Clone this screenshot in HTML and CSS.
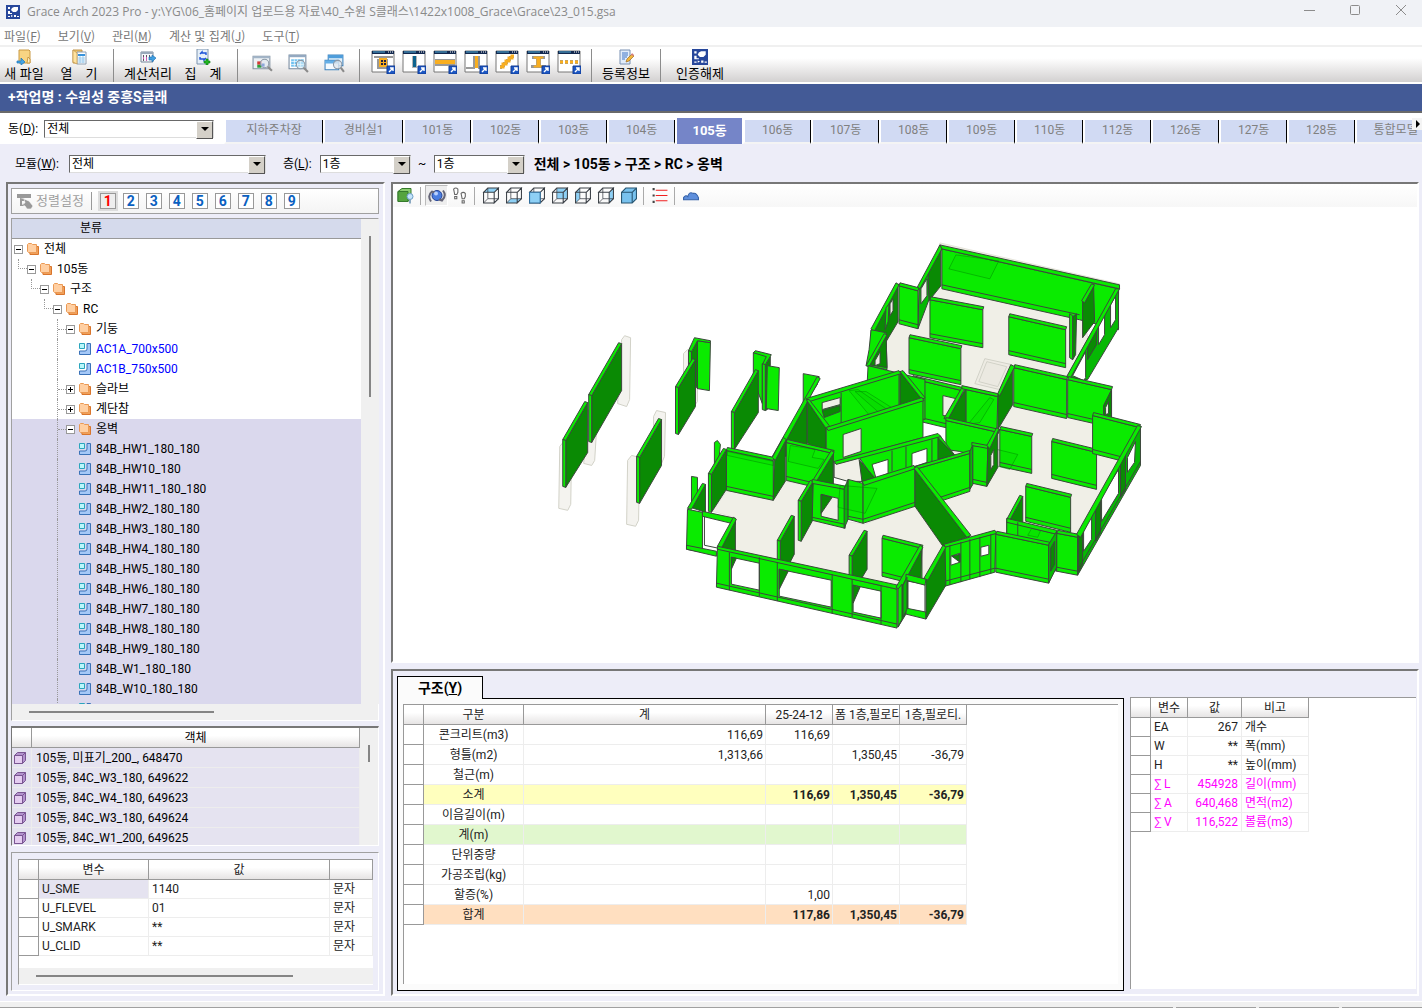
FILE: index.html
```
<!DOCTYPE html>
<html lang="ko">
<head>
    <meta charset="UTF-8">
    <meta name="viewport" content="width=device-width, initial-scale=1.0">
    <title>Grace Arch 2023 Pro</title>
    <link rel="stylesheet" href="styles.css">
</head>
<body>
    <!-- Icon shapes -->
    <svg class="sprite" aria-hidden="true">
        <symbol id="i-logo" viewBox="0 0 14 14">
            <rect width="14" height="14" fill="#27479b"/>
            <path d="M2 2h2v2H2zM2 6h2v2h2v1H2zM6 3l2-1h4v3l-2 2H7L5 5zM2 11h2v1H2zM5 10l2 1-2 1zM8 10h2v2H8zM11 11h2v1h-2z" fill="#fff"/>
        </symbol>
        <symbol id="i-new" viewBox="0 0 16 16">
            <path d="M3 1h10l1 1v12H3z" fill="#f8d583" stroke="#c99a45"/>
            <path d="M12 8l2 2v4h-3z" fill="#fff1c2" stroke="#c99a45"/>
            <path d="M1 12h4V9l4 4-4 3v-2H1z" fill="#45a5e5" stroke="#1874b9" stroke-width=".7"/>
        </symbol>
        <symbol id="i-open" viewBox="0 0 16 16">
            <path d="M2 1h9v13H2z" fill="#f0c46a" stroke="#c0954a"/>
            <path d="M6 3h9v12H6z" fill="#fff" stroke="#8c9db0"/>
            <path d="M7 5h7v2H7z" fill="#3793dc"/>
            <path d="M7 9h7M7 11h7M7 13h7M9 7v7M12 7v7" stroke="#8bc3ea" stroke-width=".8"/>
            <path d="M2 1l4 3v11l-4-2z" fill="#ffe3a0" stroke="#c0954a" stroke-width=".7"/>
        </symbol>
        <symbol id="i-calc" viewBox="0 0 16 16">
            <path d="M1 3h12v10H1z" fill="#f6f8fb" stroke="#77879b"/>
            <path d="M1 3h12v2H1z" fill="#9aa9ba"/>
            <path d="M3 7h1M6 7h1M9 7h1M3 11h1" stroke="#323" stroke-width="1.400"/>
            <path d="M3 9h1M6 9h1M6 11h1" stroke="#c0309c" stroke-width="1.400"/>
            <path d="M9 8h3V6l4 3-4 4v-2H9z" fill="#3f9ee0" stroke="#1d6aac" stroke-width=".6"/>
        </symbol>
        <symbol id="i-sum" viewBox="0 0 16 16">
            <path d="M2 0h11v15H2z" fill="#e5eff9" stroke="#7d93ad"/>
            <path d="M5 5l2-2v1h4v2M11 9l-2 2v-1H5V8" fill="none" stroke="#1a52d8" stroke-width="1.4"/>
            <path d="M9 12h2v-2h2v2h2v2h-2v2h-2v-2H9z" fill="#22b722" stroke="#0b7d12" stroke-width=".6"/>
        </symbol>
        <symbol id="i-find1" viewBox="0 0 20 18">
            <path d="M1 2h16v12H1z" fill="#edf1f5" stroke="#8392a3"/><path d="M1 2h16v2H1z" fill="#a2b4c7"/>
            <path d="M5 10h4v3H5z" fill="#28a13a"/><path d="M5 7h4v3H5z" fill="#d43a35"/><path d="M9 9h3v3H9z" fill="#3a68c9"/>
            <circle cx="12" cy="9" r="4" fill="#dfe6ed" fill-opacity=".5" stroke="#8b98a5"/><path d="M15 12l4 4" stroke="#8a8a8a" stroke-width="2"/>
        </symbol>
        <symbol id="i-find2" viewBox="0 0 20 18">
            <path d="M1 1h16v13H1z" fill="#fff" stroke="#75899f"/><path d="M1 1h16v2H1z" fill="#93a9c1"/>
            <path d="M3 5h12v7H3z" fill="#6cc0f0"/><path d="M3 7h12M3 10h12M6 5v7M9 5v7M12 5v7" stroke="#fff" stroke-width=".7"/>
            <circle cx="12" cy="10" r="4" fill="#d6edf8" fill-opacity=".6" stroke="#8b98a5"/><path d="M15 13l4 4" stroke="#8a8a8a" stroke-width="2"/>
        </symbol>
        <symbol id="i-find3" viewBox="0 0 20 18">
            <path d="M4 1h14v10H4z" fill="#e5f2fc" stroke="#3f83bd"/><path d="M4 1h14v3H4z" fill="#4e9ddb"/>
            <path d="M1 6h13v9H1z" fill="#f4faff" stroke="#3f83bd"/><path d="M1 6h13v3H1z" fill="#64afe7"/>
            <circle cx="13" cy="10" r="4" fill="#dfe6ed" fill-opacity=".8" stroke="#8b98a5"/><path d="M16 13l3 4" stroke="#8a8a8a" stroke-width="2"/>
        </symbol>
        <symbol id="i-win" viewBox="0 0 24 24">
            <path d="M1 1h22v21H1z" fill="#fff" stroke="#777"/><path d="M1 1h22v3H1z" fill="#13294f"/>
            <path d="M2 2h12" stroke="#58b2dc"/><path d="M17 2h1M19 2h1M21 2h1" stroke="#fff"/>
        </symbol>
        <symbol id="i-arrow" viewBox="0 0 24 24">
            <path d="M16 16h8v8h-8z" fill="#1c57c4" stroke="#123c94"/><path d="M18 22l4-4M19 18h3v3" fill="none" stroke="#fff" stroke-width="1.4"/>
        </symbol>
        <symbol id="i-doc" viewBox="0 0 16 16">
            <path d="M2 1h10v14H2z" fill="#e1ecfa" stroke="#7890b2"/><path d="M4 4h6M4 6h6M4 8h5M4 10h3" stroke="#3f75c6"/>
            <path d="M8 13l1-3 5-5 2 2-5 5z" fill="#f3b73c" stroke="#9b6a22" stroke-width=".7"/><path d="M13 6l1-2 2 2-1 1z" fill="#d67c80"/>
        </symbol>
        <symbol id="i-cube" viewBox="0 0 16 16">
            <path d="M1 5l4-4h10l-4 4zM1 5h10v10H1zM11 5l4-4v10l-4 4z" fill="none" stroke="#3b4047"/>
            <path d="M5 1v10h10M5 11l-4 4" fill="none" stroke="#3b4047" stroke-width=".7"/>
        </symbol>
        <symbol id="i-folder" viewBox="0 0 12 12">
            <path d="M2 3.500h9.500v8H3z" fill="#f0a05a" stroke="#d9752c"/>
            <path d="M.5 1.500l1-1h3l1 1h4v8h-8l-1-1z" fill="#ffcfa2" stroke="#eb9a55"/>
        </symbol>
        <symbol id="i-part" viewBox="0 0 12 12">
            <path d="M8 .5h3.500v11H.5V8H6q2 0 2-2z" fill="#a5c8f7" stroke="#3a72b8"/><path d="M.5.5h5v5h-5z" fill="#b9f6fa" stroke="#2ba5bd"/>
        </symbol>
        <symbol id="i-box" viewBox="0 0 12 12">
            <path d="M.5 3.500l3-3h8v8l-3 3h-8z" fill="#b292cc" stroke="#7a5592"/><path d="M.5 3.500h8v8h-8z" fill="#e5cdf1" stroke="#7a5592"/><path d="M8.500 3.500l3-3" stroke="#7a5592"/>
        </symbol>
    </svg>

    <header class="titlebar">
        <svg class="logo"><use href="#i-logo"/></svg>
        <span class="title-text">Grace Arch 2023 Pro - y:\YG\06_홈페이지 업로드용 자료\40_수원 S클래스\1422x1008_Grace\Grace\23_015.gsa</span>
        <button class="win-btn" aria-label="Minimize"><svg viewBox="0 0 11 11"><path d="M0 5.500h11"/></svg></button>
        <button class="win-btn" aria-label="Maximize"><svg viewBox="0 0 11 11"><rect x=".5" y=".5" width="9" height="9" rx="1"/></svg></button>
        <button class="win-btn" aria-label="Close"><svg viewBox="0 0 11 11"><path d="M0 0l10 10M10 0L0 10"/></svg></button>
    </header>

    <nav class="menubar">
        <a href="#">파일(<u>F</u>)</a>
        <a href="#">보기(<u>V</u>)</a>
        <a href="#">관리(<u>M</u>)</a>
        <a href="#">계산 및 집계(<u>J</u>)</a>
        <a href="#">도구(<u>T</u>)</a>
    </nav>

    <div class="toolbar">
        <div class="tools">
            <button class="tool"><svg><use href="#i-new"/></svg>새 파일</button>
            <button class="tool"><svg><use href="#i-open"/></svg>열&emsp;기</button>
        </div>
        <div class="tools">
            <button class="tool"><svg><use href="#i-calc"/></svg>계산처리</button>
            <button class="tool"><svg><use href="#i-sum"/></svg>집&emsp;계</button>
        </div>
        <div class="tools">
            <button class="tool find" aria-label="Find object"><svg><use href="#i-find1"/></svg></button>
            <button class="tool find" aria-label="Find table"><svg><use href="#i-find2"/></svg></button>
            <button class="tool find" aria-label="Find window"><svg><use href="#i-find3"/></svg></button>
        </div>
        <div class="tools tight">
            <button class="tool win" aria-label="Footing"><svg viewBox="0 0 24 24"><use href="#i-win"/><path d="M3 7h19M7 9v9h9V9" fill="none" stroke="#999" stroke-width="2"/><path d="M8 8h8v9H8z" fill="#f8ae20"/><path d="M10 11h2M13 11h2M10 14h2M13 14h2" stroke="#224" stroke-width="2"/><use href="#i-arrow"/></svg></button>
            <button class="tool win" aria-label="Column"><svg viewBox="0 0 24 24"><use href="#i-win"/><path d="M10 6h5v12h-5z" fill="#b5b5b5"/><path d="M11 6h3v11h-3z" fill="#0e638e"/><use href="#i-arrow"/></svg></button>
            <button class="tool win" aria-label="Beam"><svg viewBox="0 0 24 24"><use href="#i-win"/><path d="M2 9h20v7H2z" fill="#999"/><path d="M2 10h20v4H2z" fill="#f8ae20"/><use href="#i-arrow"/></svg></button>
            <button class="tool win" aria-label="Wall"><svg viewBox="0 0 24 24"><use href="#i-win"/><path d="M2 18h8M14 18h8M10 6v13M15 6v13" stroke="#999" stroke-width="2"/><path d="M11 6h3v12h-3z" fill="#f8ae20"/><use href="#i-arrow"/></svg></button>
            <button class="tool win" aria-label="Stair"><svg viewBox="0 0 24 24"><use href="#i-win"/><path d="M6 19v-3h3v-3h3v-3h3V7h4" fill="none" stroke="#999" stroke-width="2"/><path d="M5 17h3v-3h3v-3h3V8h3V6h2" fill="none" stroke="#f8ae20" stroke-width="3"/><use href="#i-arrow"/></svg></button>
            <button class="tool win" aria-label="Steel"><svg viewBox="0 0 24 24"><use href="#i-win"/><path d="M6 6h13v3h-4v6h5v3H5v-3h5V9H6z" fill="#999"/><path d="M8 7h9v1h-3v8h3v1H8v-1h3V8H8z" fill="#f8ae20" stroke="#f8ae20"/><use href="#i-arrow"/></svg></button>
            <button class="tool win" aria-label="Etc"><svg viewBox="0 0 24 24"><use href="#i-win"/><path d="M3 12h19" stroke="#999" stroke-width="4" stroke-dasharray="3 2"/><path d="M3 12h19" stroke="#f8ae20" stroke-width="3" stroke-dasharray="3 2"/><use href="#i-arrow"/></svg></button>
        </div>
        <div class="tools">
            <button class="tool"><svg><use href="#i-doc"/></svg>등록정보</button>
        </div>
        <div class="tools">
            <button class="tool wide"><svg><use href="#i-logo"/></svg>인증해제</button>
        </div>
    </div>

    <div class="job">+작업명 : 수원성 중흥S클래</div>

    <div class="building">
        <label for="dong">동(<u>D</u>):</label>
        <span class="combo combo-dong"><select id="dong"><option>전체</option></select></span>
        <div class="tabs">
            <button class="tab tab-first">지하주차장</button>
            <button class="tab tab-second">경비실1</button>
            <button class="tab">101동</button>
            <button class="tab">102동</button>
            <button class="tab">103동</button>
            <button class="tab">104동</button>
            <button class="tab active">105동</button>
            <button class="tab">106동</button>
            <button class="tab">107동</button>
            <button class="tab">108동</button>
            <button class="tab">109동</button>
            <button class="tab">110동</button>
            <button class="tab">112동</button>
            <button class="tab">126동</button>
            <button class="tab">127동</button>
            <button class="tab">128동</button>
            <button class="tab tab-second">통합모델</button>
            <button class="tab-next" aria-label="Next tabs"></button>
        </div>
    </div>

    <div class="filter">
        <label for="module">모듈(<u>W</u>):</label>
        <span class="combo combo-module"><select id="module"><option>전체</option></select></span>
        <label for="floor1" class="floor-label">층(<u>L</u>):</label>
        <span class="combo combo-floor"><select id="floor1"><option>1층</option></select></span>
        <label for="floor2" class="tilde">~</label>
        <span class="combo combo-floor"><select id="floor2"><option>1층</option></select></span>
        <span class="path">전체 &gt; 105동 &gt; 구조 &gt; RC &gt; 옹벽</span>
    </div>

    <main class="main">
        <section class="panel side">
            <div class="levelbar">
                <button class="sort" disabled><svg viewBox="0 0 16 16"><path d="M0 1h14v4H0zM3 5v8h5v-2H5V8h3V6z" fill="#999"/><path d="M7 6l5 2 4 5-2 3h-4l-2-3-3-2 3-1z" fill="#999" stroke="#fff" stroke-width=".6"/></svg>정렬설정</button>
                <button class="level on">1</button>
                <button class="level">2</button>
                <button class="level">3</button>
                <button class="level">4</button>
                <button class="level">5</button>
                <button class="level">6</button>
                <button class="level">7</button>
                <button class="level">8</button>
                <button class="level">9</button>
            </div>

            <div class="treebox">
                <div class="treearea">
                    <div class="treehead">분류</div>
                    <ul class="tree">
                        <li class="l0"><i class="toggle minus"></i><svg><use href="#i-folder"/></svg>전체</li>
                        <li class="l1"><i class="guide corner"></i><i class="toggle minus"></i><svg><use href="#i-folder"/></svg>105동</li>
                        <li class="l2"><i class="guide corner"></i><i class="toggle minus"></i><svg><use href="#i-folder"/></svg>구조</li>
                        <li class="l3"><i class="guide corner"></i><i class="toggle minus"></i><svg><use href="#i-folder"/></svg>RC</li>
                        <li class="l4"><i class="guide tee"></i><i class="toggle minus"></i><svg><use href="#i-folder"/></svg>기둥</li>
                        <li class="l4 link"><i class="guide"></i><i class="blank"></i><svg><use href="#i-part"/></svg>AC1A_700x500</li>
                        <li class="l4 link"><i class="guide"></i><i class="blank"></i><svg><use href="#i-part"/></svg>AC1B_750x500</li>
                        <li class="l4"><i class="guide tee"></i><i class="toggle plus"></i><svg><use href="#i-folder"/></svg>슬라브</li>
                        <li class="l4"><i class="guide tee"></i><i class="toggle plus"></i><svg><use href="#i-folder"/></svg>계단참</li>
                        <li class="l4 sel"><i class="guide tee"></i><i class="toggle minus"></i><svg><use href="#i-folder"/></svg>옹벽</li>
                        <li class="l4 sel"><i class="guide"></i><i class="blank"></i><svg><use href="#i-part"/></svg>84B_HW1_180_180</li>
                        <li class="l4 sel"><i class="guide"></i><i class="blank"></i><svg><use href="#i-part"/></svg>84B_HW10_180</li>
                        <li class="l4 sel"><i class="guide"></i><i class="blank"></i><svg><use href="#i-part"/></svg>84B_HW11_180_180</li>
                        <li class="l4 sel"><i class="guide"></i><i class="blank"></i><svg><use href="#i-part"/></svg>84B_HW2_180_180</li>
                        <li class="l4 sel"><i class="guide"></i><i class="blank"></i><svg><use href="#i-part"/></svg>84B_HW3_180_180</li>
                        <li class="l4 sel"><i class="guide"></i><i class="blank"></i><svg><use href="#i-part"/></svg>84B_HW4_180_180</li>
                        <li class="l4 sel"><i class="guide"></i><i class="blank"></i><svg><use href="#i-part"/></svg>84B_HW5_180_180</li>
                        <li class="l4 sel"><i class="guide"></i><i class="blank"></i><svg><use href="#i-part"/></svg>84B_HW6_180_180</li>
                        <li class="l4 sel"><i class="guide"></i><i class="blank"></i><svg><use href="#i-part"/></svg>84B_HW7_180_180</li>
                        <li class="l4 sel"><i class="guide"></i><i class="blank"></i><svg><use href="#i-part"/></svg>84B_HW8_180_180</li>
                        <li class="l4 sel"><i class="guide"></i><i class="blank"></i><svg><use href="#i-part"/></svg>84B_HW9_180_180</li>
                        <li class="l4 sel"><i class="guide"></i><i class="blank"></i><svg><use href="#i-part"/></svg>84B_W1_180_180</li>
                        <li class="l4 sel"><i class="guide"></i><i class="blank"></i><svg><use href="#i-part"/></svg>84B_W10_180_180</li>
                        <li class="l4 sel"><i class="guide"></i><i class="blank"></i><svg><use href="#i-part"/></svg>84B_W11_180_180</li>
                    </ul>
                </div>
                <div class="vscroll"><i class="thumb thumb-tree"></i></div>
                <div class="hscroll"><i class="thumb thumb-tree-h"></i></div>
            </div>

            <div class="objects">
                <div class="clip">
                    <table class="grid">
                        <colgroup><col class="w20"><col></colgroup>
                        <thead><tr><th></th><th>객체</th></tr></thead>
                        <tbody>
                            <tr><td><svg><use href="#i-box"/></svg></td><td>105동, 미표기_200_, 648470</td></tr>
                            <tr><td><svg><use href="#i-box"/></svg></td><td>105동, 84C_W3_180, 649622</td></tr>
                            <tr><td><svg><use href="#i-box"/></svg></td><td>105동, 84C_W4_180, 649623</td></tr>
                            <tr><td><svg><use href="#i-box"/></svg></td><td>105동, 84C_W3_180, 649624</td></tr>
                            <tr><td><svg><use href="#i-box"/></svg></td><td>105동, 84C_W1_200, 649625</td></tr>
                        </tbody>
                    </table>
                </div>
                <div class="vscroll"><i class="thumb thumb-obj"></i></div>
            </div>

            <div class="vars">
                <div class="varsarea">
                    <table class="grid short">
                        <colgroup><col class="w20"><col class="w110"><col><col class="w43"></colgroup>
                        <thead><tr><th></th><th>변수</th><th>값</th><th></th></tr></thead>
                        <tbody>
                            <tr><th></th><td class="current">U_SME</td><td>1140</td><td>문자</td></tr>
                            <tr><th></th><td>U_FLEVEL</td><td>01</td><td>문자</td></tr>
                            <tr><th></th><td>U_SMARK</td><td>**</td><td>문자</td></tr>
                            <tr><th></th><td>U_CLID</td><td>**</td><td>문자</td></tr>
                        </tbody>
                    </table>
                    <div class="hscroll"><i class="thumb thumb-vars"></i></div>
                </div>
            </div>
        </section>

        <div class="work">
            <section class="panel view">
                <div class="viewbar">
                    <button aria-label="Render"><svg viewBox="0 0 18 16"><path d="M1 4l4-3h9v9l-3 4H1z" fill="#8cce70" stroke="#357a2c"/><path d="M1 4h10v10H1z" fill="#55a43e" stroke="#357a2c"/><circle cx="13" cy="9" r="3" fill="#c3e4fb" stroke="#6c9cc4"/><path d="M12 12h2v4h-2z" fill="#8ba9c2"/></svg></button>
                    <i class="sep"></i>
                    <button class="pressed" aria-label="Orbit"><svg viewBox="0 0 18 16"><circle cx="9" cy="8" r="5" fill="#4a7de0" stroke="#213f93"/><path d="M3 14Q-1 8 4 4l3 1M15 3q4 5-1 10l-3-1" fill="none" stroke="#667" stroke-width="2"/><circle cx="8" cy="6" r="2" fill="#b9d1ff"/></svg></button>
                    <button aria-label="Walk"><svg viewBox="0 0 16 16"><path d="M2 2q2-2 4 0v3L5 7H3zM3 9h2v2H3zM9 6q2-2 4 0v3l-1 2h-2zM10 13h2v2h-2z" fill="#fff" stroke="#666"/></svg></button>
                    <i class="sep"></i>
                    <button aria-label="Top"><svg viewBox="0 0 16 16"><path d="M1 5l4-4h10l-4 4z" fill="#8ed0f5"/><use href="#i-cube"/></svg></button>
                    <button aria-label="Bottom"><svg viewBox="0 0 16 16"><path d="M1 15l4-4h10l-4 4z" fill="#8ed0f5"/><use href="#i-cube"/></svg></button>
                    <button aria-label="Front"><svg viewBox="0 0 16 16"><use href="#i-cube"/><path d="M1 5h10v10H1z" fill="#8ed0f5" stroke="#2f6f9f"/></svg></button>
                    <button aria-label="Back"><svg viewBox="0 0 16 16"><path d="M5 1h10v10H5z" fill="#8ed0f5"/><use href="#i-cube"/></svg></button>
                    <button aria-label="Left"><svg viewBox="0 0 16 16"><path d="M1 5l4-4v10l-4 4z" fill="#8ed0f5"/><use href="#i-cube"/></svg></button>
                    <button aria-label="Right"><svg viewBox="0 0 16 16"><path d="M11 5l4-4v10l-4 4z" fill="#8ed0f5"/><use href="#i-cube"/></svg></button>
                    <button aria-label="Isometric"><svg viewBox="0 0 16 16"><path d="M1 5l4-4h10v10l-4 4H1z" fill="#79c2ee" stroke="#26536f"/><path d="M1 5h10v10M11 5l4-4" fill="none" stroke="#26536f"/></svg></button>
                    <i class="sep"></i>
                    <button aria-label="Levels"><svg viewBox="0 0 16 16"><path d="M1 2h2M1 8h2M1 14h2" stroke="#444" stroke-width="2"/><path d="M4 3h11M4 8h11M4 13h11" stroke="#f02020"/></svg></button>
                    <i class="sep"></i>
                    <button aria-label="Terrain"><svg viewBox="0 0 16 16"><path d="M1 12V10q2-3 4-1 1-5 5-3 3-1 5 4v2z" fill="#5e8fdc" stroke="#3461a8"/></svg></button>
                </div>
                <svg class="model" id="model" viewBox="392 207 1026 455" preserveAspectRatio="xMidYMid meet"></svg>
            </section>

            <section class="panel result">
                <div class="sheet">
                    <button class="sheet-tab">구조(<u>Y</u>)</button>
                    <div class="sheet-page">
                        <div class="sheet-area">
                            <table class="grid sums">
                                <colgroup><col class="w20"><col class="w100"><col class="w242"><col class="w67"><col class="w67"><col class="w67"></colgroup>
                                <thead><tr><th></th><th>구분</th><th>계</th><th>25-24-12</th><th>폼 1층,필로티</th><th>1층,필로티.</th></tr></thead>
                                <tbody>
                                    <tr><th></th><td>콘크리트(m3)</td><td>116,69</td><td>116,69</td><td></td><td></td></tr>
                                    <tr><th></th><td>형틀(m2)</td><td>1,313,66</td><td></td><td>1,350,45</td><td>-36,79</td></tr>
                                    <tr><th></th><td>철근(m)</td><td></td><td></td><td></td><td></td></tr>
                                    <tr class="yellow"><th></th><td>소계</td><td></td><td>116,69</td><td>1,350,45</td><td>-36,79</td></tr>
                                    <tr><th></th><td>이음길이(m)</td><td></td><td></td><td></td><td></td></tr>
                                    <tr class="green"><th></th><td>계(m)</td><td></td><td></td><td></td><td></td></tr>
                                    <tr><th></th><td>단위중량</td><td></td><td></td><td></td><td></td></tr>
                                    <tr><th></th><td>가공조립(kg)</td><td></td><td></td><td></td><td></td></tr>
                                    <tr><th></th><td>할증(%)</td><td></td><td>1,00</td><td></td><td></td></tr>
                                    <tr class="orange"><th></th><td>합계</td><td></td><td>117,86</td><td>1,350,45</td><td>-36,79</td></tr>
                                </tbody>
                            </table>
                        </div>
                    </div>
                </div>
                <div class="totals">
                    <table class="grid short">
                        <colgroup><col class="w20"><col class="w37"><col class="w54"><col class="w67"></colgroup>
                        <thead><tr><th></th><th>변수</th><th>값</th><th>비고</th></tr></thead>
                        <tbody>
                            <tr><th></th><td>EA</td><td>267</td><td>개수</td></tr>
                            <tr><th></th><td>W</td><td>**</td><td>폭(mm)</td></tr>
                            <tr><th></th><td>H</td><td>**</td><td>높이(mm)</td></tr>
                            <tr class="pink"><th></th><td>∑ L</td><td>454928</td><td>길이(mm)</td></tr>
                            <tr class="pink"><th></th><td>∑ A</td><td>640,468</td><td>면적(m2)</td></tr>
                            <tr class="pink"><th></th><td>∑ V</td><td>116,522</td><td>볼륨(m3)</td></tr>
                        </tbody>
                    </table>
                </div>
            </section>
        </div>
    </main>

    <footer class="status"><i></i><i></i><i></i><i></i></footer>
    <script src="model.js"></script>
</body>
</html>
```
FILE: styles.css
```
* {
    margin: 0;
    padding: 0;
    box-sizing: border-box;
}

body {
    display: flex;
    flex-direction: column;
    height: 100vh;
    overflow: hidden;
    background: #ededf8;
    color: #000;
    font: 12px/16px Roboto, "Noto Sans CJK KR", sans-serif;
}

button, select {
    font: inherit;
    color: inherit;
    background: none;
    border: none;
}

table {
    border-collapse: separate;
    border-spacing: 0;
}

.sprite {
    display: none;
}

/* Title bar and menu */
.titlebar {
    display: flex;
    align-items: center;
    height: 27px;
    padding: 0 10px 4px 6px;
    background: #f0f2f6;
    color: #8a8a8a;
    font-family: "Open Sans", "Noto Sans CJK KR", sans-serif;
}

.logo {
    width: 14px;
    height: 14px;
    margin-right: 7px;
}

.title-text {
    flex: 1;
    white-space: nowrap;
    overflow: hidden;
}

.win-btn {
    width: 22px;
    height: 20px;
    margin-left: 24px;
}

.win-btn svg {
    width: 11px;
    height: 11px;
    fill: none;
    stroke: #8c8c8c;
}

.menubar {
    display: flex;
    gap: 17px;
    height: 20px;
    padding: 1px 4px;
    background: #fff;
    border-bottom: 2px solid #f0f0f0;
    font-family: "Noto Sans CJK KR", sans-serif;
}

.menubar a {
    color: #777;
    text-decoration: none;
}

/* Main toolbar */
.toolbar {
    display: flex;
    height: 37px;
    padding: 2px 0;
    background: linear-gradient(#fff 30%, #d2d0d0 95%, #fff 95%);
}

.tools {
    display: flex;
    gap: 7px;
    padding: 0 10px;
    border-right: 1px solid #8c8c8c;
}

.tools:first-child {
    padding-left: 0;
}

.tools:last-child {
    border-right: none;
}

.tight {
    gap: 6px;
}

.tool {
    display: flex;
    flex-direction: column;
    align-items: center;
    width: 48px;
    height: 32px;
    line-height: 15px;
    white-space: nowrap;
    font-size: 13px;
    font-family: "Noto Sans CJK KR", sans-serif;
}

.tool svg {
    width: 16px;
    height: 16px;
    flex: none;
}

.wide {
    width: 58px;
}

.find {
    width: 29px;
    padding-top: 5px;
}

.find svg {
    width: 21px;
    height: 19px;
}

.win {
    width: 25px;
    padding-top: 1px;
}

.win svg {
    width: 24px;
    height: 24px;
}

.job {
    height: 29px;
    padding-left: 8px;
    line-height: 27px;
    background: #435a96;
    border-bottom: 2px solid #696969;
    color: #fff;
    font-size: 14px;
    font-weight: bold;
}

/* Combo boxes */
.combo {
    position: relative;
    display: inline-block;
    height: 18px;
    border: 1px solid #696969;
    border-right-color: #ddd;
    border-bottom-color: #ddd;
    background: #fff;
}

.combo select {
    display: block;
    width: 100%;
    height: 16px;
    padding-left: 2px;
    appearance: none;
    outline: none;
}

.combo::before {
    content: "";
    position: absolute;
    top: 0;
    right: 0;
    width: 15px;
    height: 16px;
    background: #d4d0c8;
    border: 1px solid #fff;
    border-right-color: #555;
    border-bottom-color: #555;
    pointer-events: none;
}

.combo::after {
    content: "";
    position: absolute;
    top: 6px;
    right: 4px;
    border: 4px solid transparent;
    border-top-color: #000;
    border-bottom: none;
    pointer-events: none;
}

.combo-dong {
    width: 170px;
    margin: 0 10px 0 6px;
}

.combo-module {
    width: 197px;
    margin: 0 17px 0 10px;
}

.combo-floor {
    width: 91px;
}

.building {
    display: flex;
    align-items: center;
    height: 31px;
    padding-left: 8px;
    background: #fff;
}

.building label, .building .combo {
    flex: none;
}

.tabs {
    position: relative;
    display: flex;
    align-self: flex-end;
    align-items: flex-end;
    flex: 1;
    min-width: 0;
    overflow: hidden;
}

.tab {
    flex: none;
    width: 68px;
    height: 24px;
    padding-bottom: 2px;
    background: #d1daf3;
    border-left: 2px solid #fff;
    border-right: 1px solid #000;
    border-bottom: 2px solid #f4f4f4;
    color: #808080;
}

.tab-first {
    width: 99px;
}

.tab-second {
    width: 80px;
}

.tab.active {
    height: 26px;
    padding-bottom: 1px;
    background: #7585c8;
    border-right-color: #fff;
    border-bottom: none;
    color: #fff;
    font-size: 13px;
    font-weight: bold;
}

.tab-next {
    position: absolute;
    top: 0;
    right: 0;
    width: 10px;
    height: 12px;
    background: #f4f4f4;
}

.tab-next::before {
    content: "";
    position: absolute;
    top: 2px;
    left: 4px;
    border: 4px solid transparent;
    border-left-color: #000;
    border-right: none;
}

.filter {
    display: flex;
    align-items: center;
    height: 38px;
    padding: 2px 15px 0;
}

.floor-label {
    margin-right: 8px;
}

.tilde {
    width: 23px;
    text-align: center;
}

.path {
    margin-left: 9px;
    font-size: 14px;
    font-weight: bold;
}

/* Main area */
.main {
    display: grid;
    grid-template-columns: 379px minmax(0, 1fr);
    grid-template-rows: minmax(0, 1fr);
    gap: 6px;
    flex: 1;
    min-height: 0;
    padding: 0 3px 0 6px;
}

.panel {
    border: 2px solid #fff;
    border-top-color: #777;
    border-left-color: #777;
    min-width: 0;
}

.side {
    display: flex;
    flex-direction: column;
    gap: 4px;
    margin-bottom: 5px;
    padding: 4px 4px 3px 3px;
}

.levelbar {
    display: flex;
    align-items: center;
    flex: none;
    height: 26px;
    padding-left: 5px;
    background: linear-gradient(#fff, #f4f4f4);
    border: 1px solid #a0a0a0;
}

.sort {
    display: flex;
    align-items: center;
    gap: 3px;
    height: 18px;
    margin-right: 8px;
    padding-right: 7px;
    border-right: 1px solid #999;
    color: #a0a0a0;
    font-size: 13px;
}

.sort svg {
    width: 16px;
    height: 16px;
}

.level {
    width: 16px;
    height: 16px;
    margin-right: 7px;
    border: 1px solid #999;
    background: #fff;
    color: #0a60c0;
    font-size: 14px;
    line-height: 14px;
    font-weight: bold;
}

.level.on {
    color: #f00;
    background: #eee;
    outline: 2px solid #ddd;
}

.treebox {
    display: grid;
    grid-template-columns: minmax(0, 1fr) 17px;
    grid-template-rows: minmax(0, 1fr) 16px;
    flex: 1;
    min-height: 0;
    background: #f0f0f0;
    border: 1px solid #a0a0a0;
    border-right-color: #fff;
    border-bottom-color: #fff;
}

.treearea {
    overflow: hidden;
    background: #fff;
}

.treehead {
    height: 20px;
    padding-left: 68px;
    line-height: 19px;
    background: #d5daec;
    border-bottom: 1px solid #999;
}

.tree {
    list-style: none;
}

.tree li {
    display: flex;
    align-items: center;
    height: 20px;
    line-height: 18px;
}

.tree svg {
    width: 12px;
    height: 12px;
    margin: 0 5px 0 4px;
}

.tree .l0 { padding-left: 2px; }
.tree .l1 { padding-left: 6px; }
.tree .l2 { padding-left: 19px; }
.tree .l3 { padding-left: 32px; }
.tree .l4 { padding-left: 45px; }

.tree .link {
    color: #00f;
}

.tree .sel {
    background: #dad8ed;
}

.guide {
    position: relative;
    width: 9px;
    height: 20px;
    border-left: 1px dotted #999;
}

.corner {
    height: 10px;
    align-self: flex-start;
    border-bottom: 1px dotted #999;
}

.tee::before {
    content: "";
    position: absolute;
    top: 10px;
    left: 0;
    right: 0;
    border-top: 1px dotted #999;
}

.blank {
    width: 9px;
}

.toggle {
    width: 9px;
    height: 9px;
    border: 1px solid #999;
    background: linear-gradient(#000, #000) center / 5px 1px no-repeat #fff;
}

.plus {
    background: linear-gradient(#000, #000) center / 5px 1px no-repeat, linear-gradient(#000, #000) center / 1px 5px no-repeat, #fff;
}

/* Scroll bars */
.vscroll, .hscroll {
    display: flex;
    background: #f0f0f0;
}

.hscroll {
    align-items: center;
    height: 16px;
}

.vscroll {
    width: 18px;
    justify-content: center;
}

.thumb {
    background: #858585;
    height: 2px;
}

.thumb-tree {
    width: 2px;
    height: 161px;
    margin-top: 17px;
}

.thumb-tree-h {
    width: 185px;
    margin-left: 17px;
}

.thumb-obj {
    width: 2px;
    height: 17px;
    margin-top: 17px;
}

.thumb-vars {
    width: 257px;
    margin-left: 17px;
}

/* Grids */
.grid {
    table-layout: fixed;
    background: #fff;
    color: #222;
}

.grid th, .grid td {
    height: 20px;
    padding: 0 2px;
    line-height: 18px;
    border-right: 1px solid #ededed;
    border-bottom: 1px solid #ededed;
    white-space: nowrap;
    overflow: hidden;
}

.grid th {
    border-color: #999;
    font-weight: normal;
}

.grid thead th {
    background: linear-gradient(#fff 40%, #e6e4e4);
}

.short tbody th, .short tbody td {
    height: 19px;
    line-height: 17px;
    padding: 0 3px;
}

.w20 { width: 20px; }
.w37 { width: 37px; }
.w43 { width: 43px; }
.w54 { width: 54px; }
.w67 { width: 67px; }
.w100 { width: 100px; }
.w110 { width: 110px; }
.w242 { width: 242px; }

.objects {
    display: flex;
    flex: none;
    height: 120px;
    margin-top: 1px;
    border: 1px solid #fff;
    border-top: 2px solid #777;
    border-left-color: #777;
}

.clip {
    flex: 1;
    overflow: hidden;
}

.clip .grid {
    width: 100%;
    background: #e5e3f0;
    color: #000;
}

.objects td:nth-child(2) {
    padding-left: 4px;
}

.objects td svg {
    display: block;
    width: 12px;
    height: 12px;
}

.vars {
    flex: none;
    height: 139px;
    margin-top: 2px;
    padding: 6px 5px 5px 6px;
    border: 1px solid #a0a0a0;
    border-right-color: #fff;
    border-bottom-color: #fff;
}

.varsarea {
    display: flex;
    flex-direction: column;
    justify-content: space-between;
    height: 100%;
    overflow: hidden;
    background: #fff;
    border: 1px solid #999;
    border-right: none;
    border-bottom-color: #fff;
}

.varsarea .grid {
    width: 100%;
}

.current {
    background: #e5e3f0;
}

.work {
    display: flex;
    flex-direction: column;
    gap: 6px;
    min-width: 0;
    min-height: 0;
    padding-bottom: 5px;
}

/* 3D view */
.view {
    display: flex;
    flex-direction: column;
    flex: 1;
    min-height: 0;
    background: #fff;
}

.viewbar {
    display: flex;
    align-items: center;
    flex: none;
    height: 23px;
    padding-left: 1px;
    background: linear-gradient(#fff, #f7f7f7);
}

.viewbar button {
    display: flex;
    align-items: center;
    justify-content: center;
    width: 23px;
    height: 21px;
}

.viewbar .pressed {
    background: #eee;
    border: 1px solid #bbb;
    border-right-color: #fff;
    border-bottom-color: #fff;
}

.viewbar svg {
    width: 18px;
    height: 17px;
}

.sep {
    width: 1px;
    height: 18px;
    margin: 0 4px 0 3px;
    background: #aaa;
}

.model {
    flex: 1;
    width: 100%;
    min-height: 0;
}

.model polygon {
    stroke: #3c463c;
    stroke-linejoin: round;
}

.model .f { fill: #0aeb00; }
.model .d { fill: #0a8a04; }
.model .m { fill: #06b804; }
.model .w { fill: #fff; }
.model .o { fill: #f0efe7; }
.model .s { fill: #f0efe7; stroke: #e6e5dc; }
.model .g { fill: #e9e8df; fill-opacity: .5; stroke: #d2d2c8; }
.model .x { fill: #007000; fill-opacity: .06; stroke: #008a00; stroke-opacity: .5; }
.model polyline { fill: none; stroke: #3c463c; }

/* Result sheet */
.result {
    display: flex;
    flex: none;
    gap: 6px;
    height: 327px;
    padding: 5px 1px 3px 4px;
}

.sheet {
    display: flex;
    flex-direction: column;
    flex: 1;
    min-width: 0;
}

.sheet-tab {
    position: relative;
    width: 86px;
    height: 23px;
    margin-bottom: -1px;
    background: #fbfbfb;
    border: 1px solid #000;
    border-bottom: none;
    font-size: 14px;
    font-weight: bold;
}

.sheet-page {
    flex: 1;
    padding: 5px;
    background: #fbfbfb;
    border: 1px solid #000;
}

.sheet-area {
    height: 280px;
    border-top: 1px solid #999;
    border-left: 1px solid #999;
    background: #fff;
}

.sums {
    width: 563px;
}

.sums td {
    text-align: right;
}

.sums td:nth-child(2) {
    text-align: center;
}

.yellow td { background: #ffffbe; }
.green td { background: #e1f7ce; }
.orange td { background: #ffdfc0; }

.yellow td:nth-child(n+3), .orange td:nth-child(n+3) {
    font-weight: bold;
}

.totals {
    width: 286px;
    margin: 21px 0 2px;
    background: #fff;
    border-top: 1px solid #999;
    border-left: 1px solid #999;
}

.totals .grid {
    width: 178px;
}

.totals td:nth-child(3) {
    text-align: right;
}

.grid .pink td {
    color: #f0f;
}

.status {
    display: flex;
    flex: none;
    gap: 3px;
    height: 7px;
    padding-top: 5px;
    background: #f0f0f0;
    border-top: 1px solid #fff;
}

.status i {
    width: 80px;
    border-top: 1px solid #a0a0a0;
}

.status i:first-child {
    flex: 1;
}
```
FILE: model.js
```
// Building model: polygons are listed back to front.
// f = lit face, d = shaded face, m = side face, o/w = opening, s = slab, g = ghost column, x = overlay
const model = document.getElementById('model');

function add(tag, cls, points) {
    const el = document.createElementNS('http://www.w3.org/2000/svg', tag);
    if (cls) el.setAttribute('class', cls);
    el.setAttribute('points', points);
    model.appendChild(el);
}

function poly(cls, points) {
    add('polygon', cls, points);
}

// Lit wall with a cap on top and a base course
function wall(x1, y1, x2, y2, h) {
    poly('f', `${x1},${y1} ${x2},${y2} ${x2},${y2 + h} ${x1},${y1 + h}`);
    poly('f', `${x1},${y1} ${x1 + 1},${y1 - 3} ${x2 + 1},${y2 - 3} ${x2},${y2}`);
    add('polyline', '', `${x1},${y1 + h - 4} ${x2},${y2 + h - 4}`);
}

// Shaded wall running away from the viewer, with its lit end and cap
function side(x1, y1, x2, y2, h, h2) {
    h2 = h2 || h;
    poly('d', `${x1},${y1} ${x2},${y2} ${x2},${y2 + h2} ${x1},${y1 + h}`);
    poly('f', `${x1 - 3},${y1 - 1} ${x2 - 3},${y2 - 1} ${x2},${y2} ${x1},${y1}`);
    poly('f', `${x1 - 3},${y1 - 1} ${x1},${y1} ${x1},${y1 + h} ${x1 - 3},${y1 + h - 1}`);
}

// Free standing columns and walls
poly('g', '621,340 624,336 630,338 629,400 626,407 617,404');
poly('g', '588,410 597,411 594,461 591,466 583,464');
poly('g', '559,447 563,442 571,443 570,505 567,511 558,509');
poly('g', '627,461 631,456 639,458 638,521 635,527 626,525');
poly('g', '653,417 656,411 665,413 664,457 661,464 653,462');
poly('g', '683,354 687,350 697,353 697,402 694,406 683,390');
side(591, 396, 621, 344, 47);
side(565, 441, 587, 403, 47, 50);
side(639, 458, 661, 420, 46);
poly('f', '697,341 710,343 709,391 697,389');
poly('d', '691,352 697,341 697,389 691,380');
poly('f', '688,351 694,338 710,341 710,343 697,341 691,352');
poly('f', '688,351 691,352 691,375 688,380');
side(678, 388, 695, 360, 47);
poly('f', '753,353 769,356 762,365 762,404 753,380');
poly('d', '765,365 770,357 770,366 767,410 765,411');
poly('f', '753,353 755,351 771,355 765,365 762,365 766,357');
poly('f', '762,364 765,365 765,411 762,410');
poly('f', '767,366 779,368 778,411 766,409');
side(734, 413, 758, 371, 37, 42);

// Upper wing
poly('s', '870,380 888,330 898,318 915,328 940,243 1120,284 1119,300 1085,318 1090,350 1080,400 1013,405 1000,400 960,390 886,370');
poly('f', '942,249 1119,289 1119,330 1080,320 942,289');
poly('f', '940,245 1120,285 1120,289 942,249');
add('polyline', '', '942,285 1080,315');
poly('x', '956,255 999,261 990,279 949,269');
poly('d', '941,249 941,286 929,301 928,272');
poly('m', '919,288 928,271 929,300 918,329');
poly('o', '921,289 927,279 927,296 921,304');
poly('f', '940,245 942,249 920,289 917,288');
wall(899, 286, 918, 291, 38);
poly('d', '898,284 898,322 886,342 871,360 871,331');
poly('f', '896,283 899,285 874,332 871,329');
poly('o', '890,304 893,299 893,311 890,316');
poly('f', '886,308 889,304 888,322 885,330');
poly('f', '871,330 886,333 887,370 866,366 869,350');
poly('d', '868,365 886,336 887,368');
poly('o', '875,361 880,352 880,364 875,366');
poly('f', '866,366 884,334 887,335 869,367');
wall(930, 300, 983, 310, 38);
wall(1009, 317, 1066, 330, 38);
wall(909, 338, 961, 349, 36);
poly('d', '1073,317 1077,314 1076,355 1073,360');
poly('f', '1070,314 1073,316 1073,360 1070,358');
poly('d', '1083,302 1094,285 1095,322 1083,338');
poly('f', '1082,301 1092,284 1095,285 1085,303');
poly('m', '1067,378 1089,338 1119,289 1119,328 1088,380');
poly('w', '1073,376 1086,352 1086,378 1084,381');
poly('w', '1099,325 1105,315 1105,335 1099,345');
poly('w', '1111,305 1116,296 1116,320 1111,328');
poly('d', '1088,345 1097,330 1097,345 1088,360');
poly('f', '1067,377 1116,289 1120,289 1071,378');
poly('g', '975,384 985,359 1012,365 1000,390');
poly('g', '979,382 987,362 1007,367 998,387');

// Right wing
poly('s', '940,460 960,415 1013,400 1093,420 1125,455 1120,480 1080,540 1010,540 965,548 930,500');
wall(1014, 368, 1067, 380, 39);
wall(1068, 380, 1112, 390, 38);
poly('d', '1112,390 1104,406 1104,425 1112,425');
poly('o', '1106,408 1109,402 1109,414 1106,415');
poly('d', '1013,367 998,395 998,430 1013,405');
poly('f', '998,394 1011,365 1015,367 1000,396');
wall(912, 379, 962, 391, 41);
poly('o', '943,396 960,400 952,417 943,416');
poly('f', '966,390 998,397 997,435 966,428');
poly('d', '966,389 947,420 966,424');
poly('f', '944,419 962,388 965,389 948,420');
poly('f', '962,386 998,394 998,397 962,389');
poly('x', '968,425 990,398 994,400 980,423');
poly('f', '946,421 999,433 988,450 970,455 960,452 946,450');
poly('f', '946,418 1000,430 999,433 946,421');
wall(1000, 430, 1032, 437, 37);
wall(1052, 442, 1097, 453, 37);
wall(1093, 416, 1140, 428, 38);
poly('x', '985,447 1018,455 1010,470 988,464');

// Stair core
poly('f', '803,374 819,377 817,385 803,405');
poly('d', '817,380 807,402 807,450 775,460');
poly('f', '772,457 817,377 820,379 776,459');
poly('f', '868,366 925,380 925,420 866,404');
poly('f', '808,400 899,374 899,408 827,428');
poly('o', '822,403 840,398 840,405 822,410');
poly('d', '822,411 840,406 840,412 824,418');
add('polyline', '', '841,393 841,424');
poly('x', '849,391 858,390 890,412 872,419');
poly('x', '855,392 866,392 898,412 880,414');
poly('d', '900,373 923,399 900,405');
poly('f', '900,372 903,371 925,398 922,400');
poly('f', '806,399 899,371 901,374 809,402');
poly('d', '807,401 826,428 826,462 807,443');
poly('f', '806,400 809,400 829,426 826,429');
poly('f', '826,429 923,401 923,438 826,465');
poly('f', '826,428 922,398 924,401 828,431');
poly('o', '843,435 861,429 861,452 843,458');

// Window row behind the hall
poly('o', '834,464 862,456 870,482 848,482 834,478');
poly('f', '859,458 940,436 955,456 876,482');
poly('f', '834,462 938,434 941,437 836,465');
poly('d', '859,460 876,480 862,483');
poly('w', '872,465 888,460 888,474 876,479');
poly('w', '912,454 927,449 927,463 912,468');
poly('d', '938,438 955,456 938,460');
add('polyline', '', '892,451 892,472');
add('polyline', '', '906,447 906,468');
add('polyline', '', '932,440 932,462');

// Left wing
poly('s', '712,512 727,491 772,501 785,482 812,487 830,520 865,525 912,505 945,545 930,580 880,587 780,565 735,558 735,518');
poly('f', '714,443 717,441 720,445 718,465 714,470');
poly('f', '691,477 697,478 697,500 691,505');
wall(726, 451, 773, 461, 40);
poly('x', '727,452 773,462 773,466 727,456');
poly('d', '774,460 785,440 785,482 773,501');
poly('f', '772,458 783,438 786,440 775,461');
wall(786, 443, 833, 454, 38);
poly('x', '790,446 815,450 812,458 824,460 818,469 788,462');
poly('d', '833,454 813,484 833,490');
poly('f', '812,482 831,451 834,453 815,484');
side(711, 475, 726, 450, 38, 40);
poly('d', '690,508 705,485 705,513');
poly('f', '687,509 702,484 705,485 691,510');
poly('w', '704,514 735,522 718,549 704,546');
poly('f', '687,510 702,513 702,553 686,550');
poly('f', '702,512 735,519 735,525 702,517');
poly('f', '686,546 716,552 716,557 686,550');
side(801, 502, 813, 482, 40, 38);
side(780, 542, 794, 517, 40, 38);
side(852, 557, 867, 532, 38);
poly('f', '813,483 845,490 845,529 812,521');
poly('o', '821,495 838,499 838,521 821,517');
poly('d', '821,495 832,498 821,514');
poly('f', '812,480 846,487 845,490 812,484');
add('polyline', '', '812,518 845,525');
poly('m', '844,489 848,480 848,520 844,529');
poly('f', '848,480 863,484 863,524 848,520');
poly('f', '863,484 915,469 915,507 863,524');
poly('f', '862,482 914,466 916,469 864,486');
add('polyline', '', '848,517 863,520 915,503');
poly('x', '840,486 877,489 865,514 838,508');
poly('f', '915,470 970,454 970,492 943,501');
poly('f', '915,467 970,451 970,454 915,470');
add('polyline', '', '940,498 970,488');
poly('d', '915,470 970,537 943,547 915,507');
poly('f', '914,469 917,467 971,536 967,538');

// Small closet by the hall
poly('m', '970,452 973,445 973,485 970,490');
poly('f', '973,446 988,448 987,487 973,484');
poly('f', '972,443 988,446 988,449 972,446');
add('polyline', '', '973,480 987,483');
poly('d', '988,448 998,430 998,468 987,487');
poly('o', '991,456 994,450 994,465 991,470');
poly('f', '987,446 997,428 999,430 990,449');

// Front right rooms
wall(1026, 487, 1071, 498, 35);
side(1010, 521, 1023, 497, 25, 32);
poly('f', '1007,522 1057,535 1057,572 1007,560');
poly('x', '1032,529 1041,531 1038,538 1028,536');
wall(1057, 534, 1078, 538, 38);
poly('f', '1007,519 1057,531 1057,535 1007,523');
add('polyline', '', '1018,523 1018,545');
poly('m', '1078,536 1141,427 1141,466 1078,576');
poly('d', '1079,537 1083,530 1083,565 1079,573');
poly('d', '1096,506 1101,498 1101,533 1096,542');
poly('d', '1121,464 1126,455 1126,490 1121,498');
poly('w', '1084,530 1092,515 1092,540 1084,552');
poly('w', '1102,498 1119,470 1119,494 1102,522');
poly('w', '1128,458 1136,442 1135,463 1128,473');
poly('f', '1077,535 1138,426 1142,427 1081,538');
add('polyline', '', '1078,571 1141,462');
poly('f', '945,547 996,534 995,573 945,587');
poly('f', '944,545 995,531 997,534 945,548');
add('polyline', '', '945,582 995,569 1049,580');
['950,546 950,586', '961,543 961,583', '970,540 970,580', '980,538 980,578', '991,535 991,574'].forEach(p => add('polyline', '', p));
poly('w', '951,557 960,554 960,563 951,566');
poly('d', '952,557 960,555 960,563');
poly('w', '981,548 989,546 989,555 981,557');
wall(996, 535, 1049, 546, 38);
poly('m', '1049,545 1057,532 1057,568 1049,584');
poly('d', '1051,549 1055,542 1055,565 1051,572');

// Front facade
wall(882, 539, 922, 549, 38);
poly('d', '720,548 735,520 735,575 720,580');
poly('f', '717,547 733,518 736,520 721,549');
poly('f', '717,549 897,590 897,629 716,588');
poly('w', '731,558 759,564 759,591 731,585');
poly('w', '779,570 831,581 831,608 779,597');
poly('w', '853,586 881,592 881,619 853,613');
poly('d', '731,558 736,559 731,570');
poly('d', '779,570 788,572 779,590');
poly('d', '853,586 860,588 853,604');
poly('f', '717,547 898,586 897,590 717,550');
add('polyline', '', '716,584 897,625');
['729,553 729,591', '759,558 759,597', '777,563 777,602', '832,575 832,614', '852,580 852,618', '881,586 881,625'].forEach(p => add('polyline', '', p));
poly('d', '922,549 920,592 898,628 898,590');
poly('f', '896,588 920,546 923,548 900,591');
poly('f', '898,590 902,585 902,620 898,628');
poly('w', '908,582 925,585 925,616 908,611');
poly('f', '906,575 926,580 925,586 906,581');
poly('f', '906,609 926,613 926,620 906,615');
poly('m', '903,586 907,578 907,610 903,618');
poly('d', '926,581 945,548 946,586 926,620');
poly('f', '924,579 943,546 946,548 928,581');
```
